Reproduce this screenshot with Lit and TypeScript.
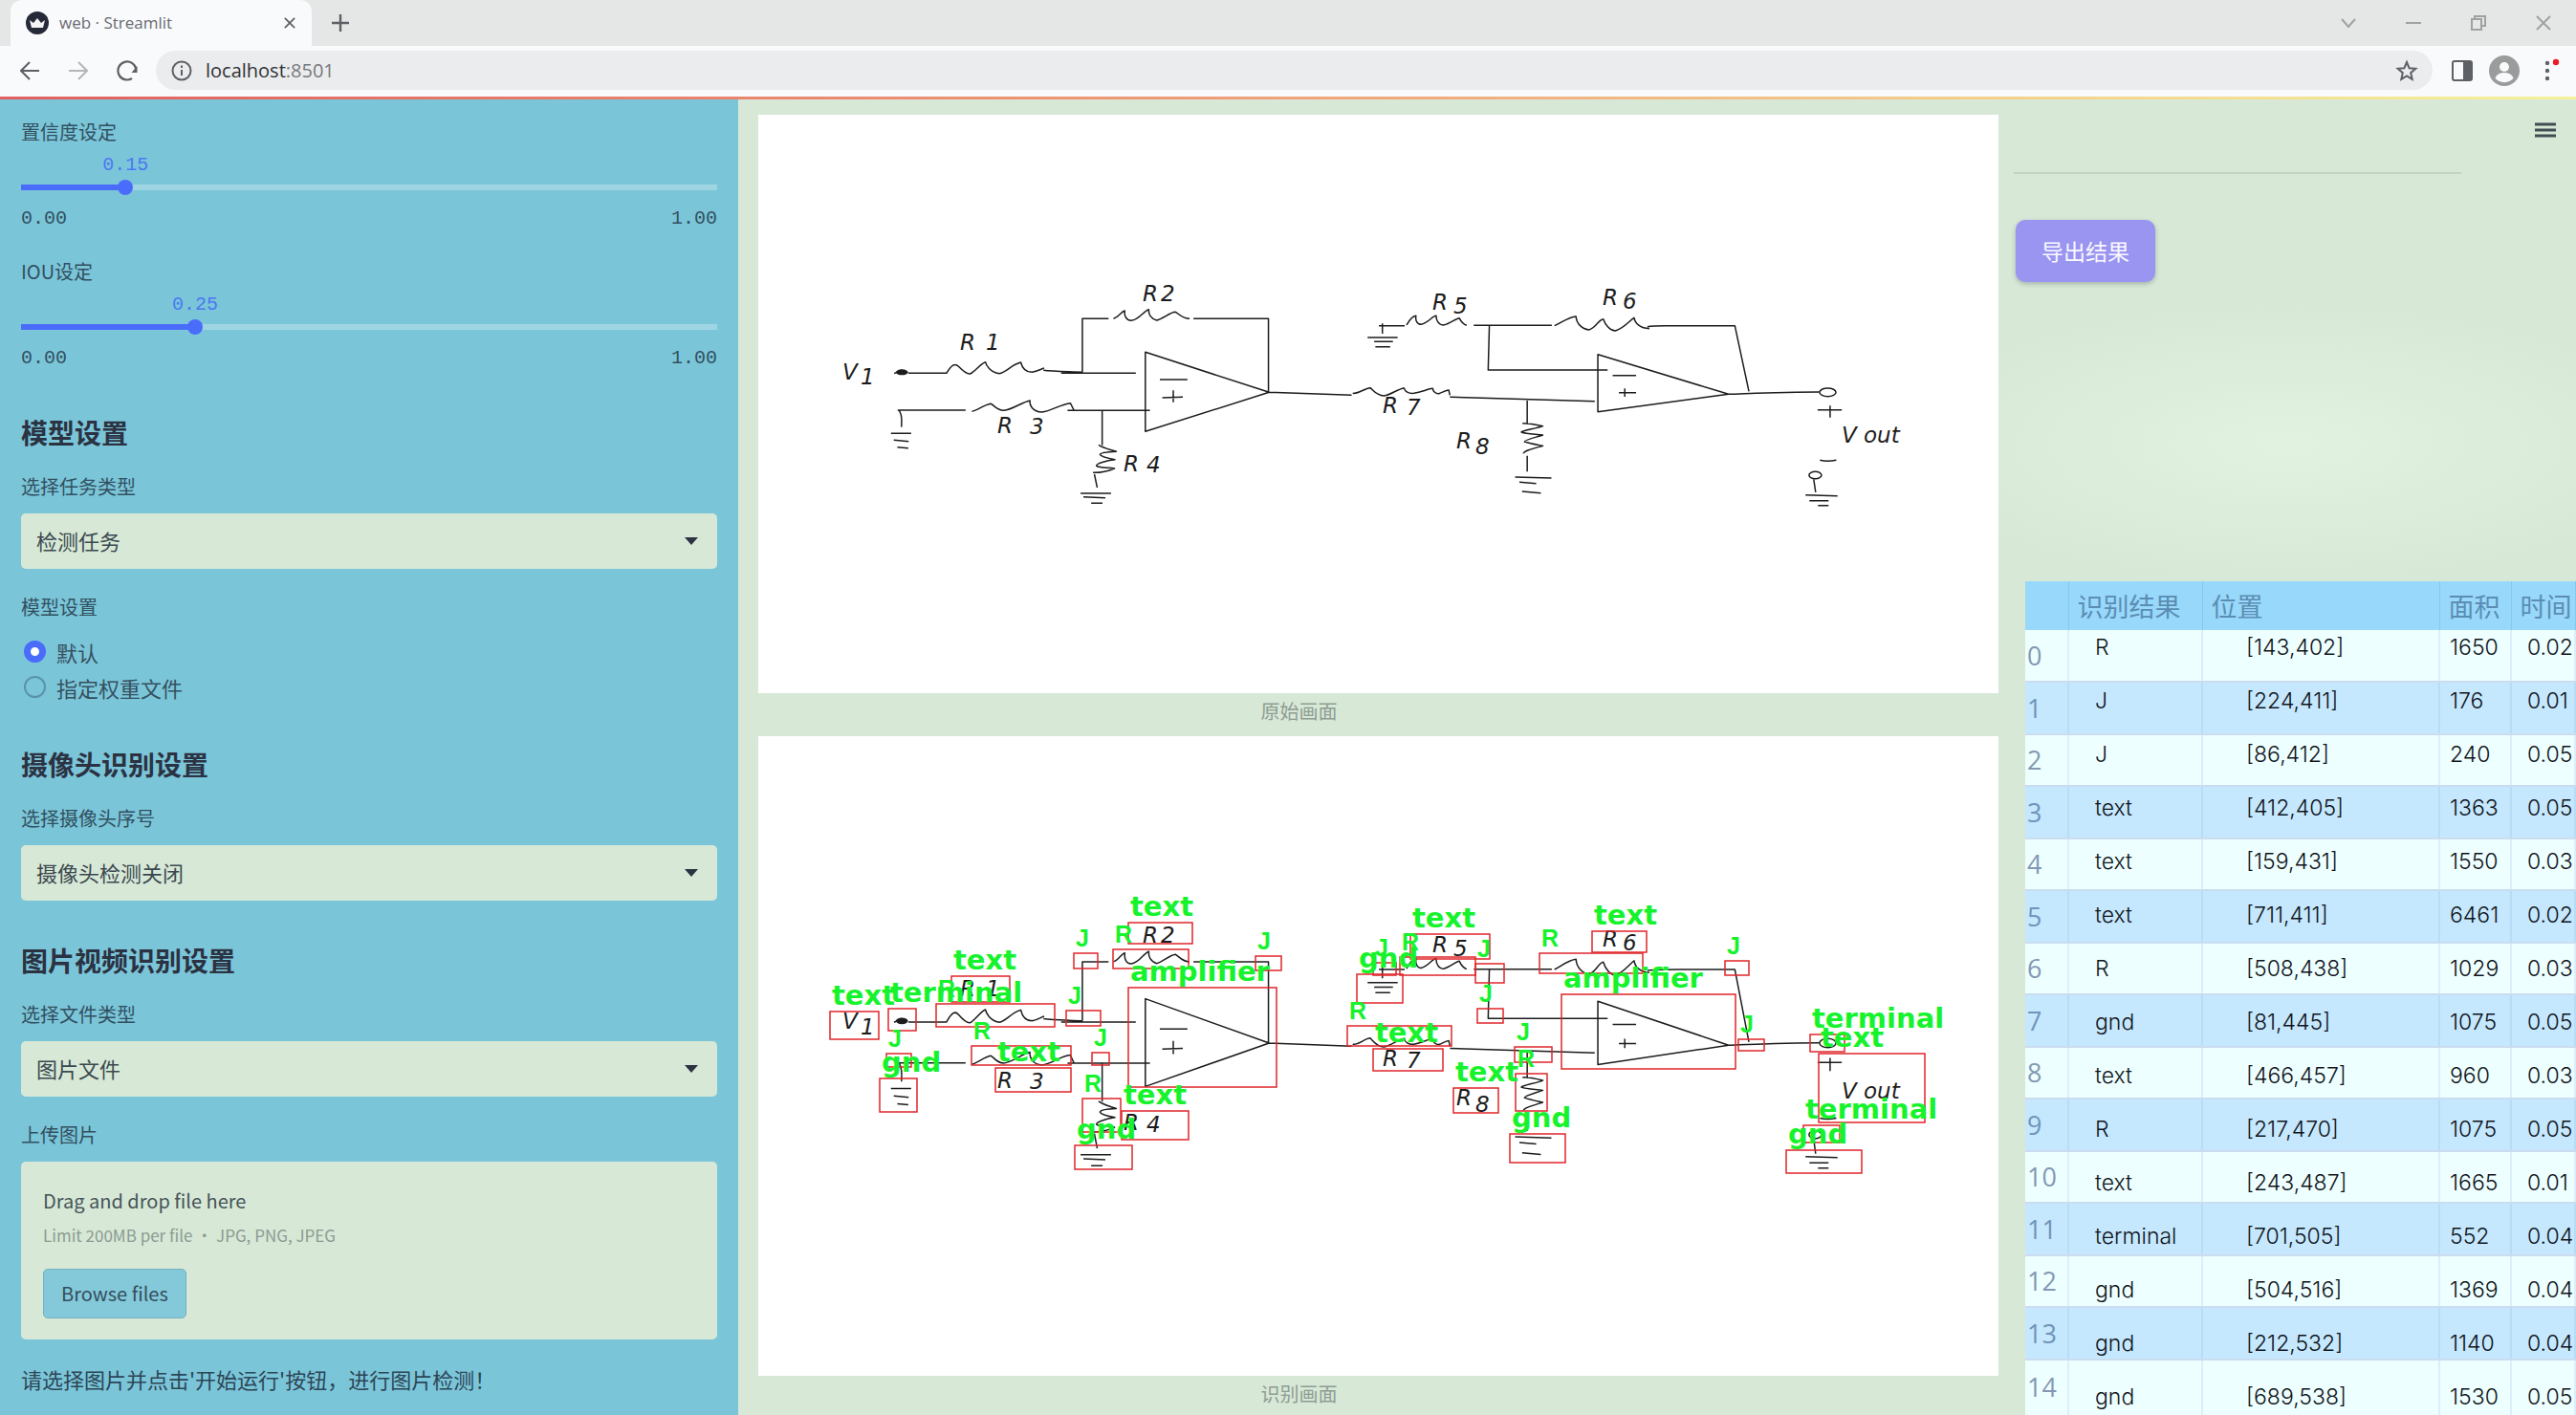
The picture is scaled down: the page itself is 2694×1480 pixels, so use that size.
import { LitElement, html, svg, css } from "lit";
import { customElement, property, state } from "lit/decorators.js";

type Box = [label: string, x: number, y: number, w: number, h: number];
type Mark = [text: string, x: number, y: number];

const BOXES: Box[] = [
  ["text", 387, 195, 67, 22],
  ["R", 371, 223, 79, 20],
  ["J", 330, 227, 25, 16],
  ["J", 520, 230, 27, 15],
  ["text", 202, 251, 61, 27],
  ["text", 75, 288, 51, 29],
  ["terminal", 136, 285, 29, 23],
  ["R", 186, 280, 124, 24],
  ["J", 322, 287, 36, 16],
  ["amplifier", 387, 263, 155, 104],
  ["R", 223, 324, 104, 20],
  ["text", 248, 347, 79, 25],
  ["J", 134, 332, 26, 14],
  ["gnd", 127, 358, 39, 35],
  ["J", 349, 331, 18, 13],
  ["R", 339, 379, 40, 35],
  ["text", 380, 392, 70, 30],
  ["gnd", 331, 428, 60, 25],
  ["text", 682, 207, 83, 26],
  ["R", 671, 231, 79, 19],
  ["J", 643, 237, 24, 13],
  ["gnd", 626, 249, 48, 30],
  ["J", 750, 238, 30, 20],
  ["R", 817, 227, 108, 21],
  ["text", 872, 204, 57, 22],
  ["J", 1011, 235, 25, 15],
  ["J", 752, 285, 27, 15],
  ["amplifier", 840, 270, 182, 78],
  ["R", 616, 303, 109, 21],
  ["text", 643, 327, 73, 23],
  ["J", 791, 325, 39, 16],
  ["R", 792, 353, 33, 39],
  ["text", 727, 368, 47, 26],
  ["gnd", 786, 416, 58, 30],
  ["J", 1025, 317, 27, 12],
  ["terminal", 1100, 312, 36, 18],
  ["text", 1109, 332, 111, 72],
  ["terminal", 1093, 407, 38, 18],
  ["gnd", 1075, 433, 79, 24],
];

const MARKS: Mark[] = [
  ["V", 88, 277], ["1", 107, 282],
  ["R", 211, 246], ["1", 238, 246],
  ["R", 402, 195], ["2", 421, 195],
  ["R", 250, 333], ["3", 284, 334],
  ["R", 382, 373], ["4", 406, 374],
  ["R", 705, 204], ["5", 727, 208],
  ["R", 883, 199], ["6", 904, 203],
  ["R", 653, 312], ["7", 678, 314],
  ["R", 730, 349], ["8", 750, 355],
  ["V", 1133, 343], ["out", 1156, 343],
];

const ROWS: [string, string, string, string][] = [
  ["R", "[143,402]", "1650", "0.02"],
  ["J", "[224,411]", "176", "0.01"],
  ["J", "[86,412]", "240", "0.05"],
  ["text", "[412,405]", "1363", "0.05"],
  ["text", "[159,431]", "1550", "0.03"],
  ["text", "[711,411]", "6461", "0.02"],
  ["R", "[508,438]", "1029", "0.03"],
  ["gnd", "[81,445]", "1075", "0.05"],
  ["text", "[466,457]", "960", "0.03"],
  ["R", "[217,470]", "1075", "0.05"],
  ["text", "[243,487]", "1665", "0.01"],
  ["terminal", "[701,505]", "552", "0.04"],
  ["gnd", "[504,516]", "1369", "0.04"],
  ["gnd", "[212,532]", "1140", "0.04"],
  ["gnd", "[689,538]", "1530", "0.05"],
];

/* First amplifier stage, in its own drawing units. */
const STAGE_ONE = `M230 332L252 321M270 331H378
C392 305 402 298 412 310C425 325 435 335 445 333C460 325 475 300 488 296
C490 305 500 328 527 332C548 328 560 305 588 297C592 315 600 328 620 328C635 325 645 318 654 315
M652 322C680 326 720 326 762 328M702 331H913M762 328V160H836
M850 160C865 155 872 137 882 135C880 150 885 165 900 166C925 162 935 135 950 131
C948 145 955 160 972 165C990 160 1010 140 1025 139C1035 145 1045 160 1065 160
M1076 160H1288V391M940 265V514L1290 391ZM981 351H1059M1019 385V422M988 408L1046 406
M720 448H953M818 448V557
M450 451C465 448 485 430 503 427C512 430 518 447 540 448C565 445 595 420 614 417
C612 430 620 452 648 453C675 450 700 428 728 425C732 432 734 440 738 446
M240 447H432M244 448C255 465 250 480 251 500M221 520H278M229 541L271 545M239 563L270 566
M808 556C820 566 840 570 858 577C835 578 812 580 812 587C815 592 835 598 854 602
C830 605 800 615 802 622C810 628 830 627 853 630C835 638 815 644 792 643M796 648L804 690
M757 708H843M765 719L827 722M787 739H819M1290 391L1523 400`;

/* Second amplifier stage and output terminals. */
const STAGE_TWO = `M152 182H218M161 175V207M123 219H200M140 232H188M143 248H181
M223 180C230 165 238 152 247 151C245 165 250 178 260 178C280 172 288 152 299 151
C298 165 305 180 318 180C335 175 348 160 358 158C362 168 368 178 377 181
M395 181H595M435 181L432 321H738
M602 182C620 172 638 155 657 153C658 175 672 192 690 195C708 190 715 162 727 161
C732 180 745 198 758 198C780 190 795 165 806 157C808 175 822 190 845 191
M840 185C860 182 880 183 918 182M918 182H1064L1100 388
M713 272V452L1048 397ZM1048 397C1080 396 1120 392 1280 390
M751 338H811M782 379V405M767 392H811
M85 394C100 397 115 378 130 377C138 385 145 400 165 402C185 398 200 380 217 378
C218 388 228 396 242 394C262 390 278 380 290 379C290 388 298 396 306 395C315 392 322 385 331 384L334 400
M334 406L705 419M532 413V488
M520 488C535 488 555 492 572 497C555 505 520 510 517 516C530 522 555 522 572 525
C555 532 525 540 525 546C540 552 560 556 572 559C555 565 520 575 523 583
M532 590V640M501 657L594 660M512 673L555 677M519 702L567 707
M1276 446H1338M1308 433V470M1282 604C1295 608 1310 607 1324 604
M1266 664L1271 705M1245 713L1327 716M1255 731H1304M1277 746H1304`;

const TALL = 669 / 605;

@customElement("circuit-view")
export class CircuitView extends LitElement {
  @property({ type: Boolean }) detected = false;

  static styles = css`
    :host { display: block; background: #fff; }
    .canvas { display: block; width: 100%; height: auto; }
    .wire { fill: none; stroke: #1c1c1c; stroke-width: 1.5; stroke-linejoin: round; }
    .dot { fill: #1c1c1c; }
    .mark { font: italic 200 23px "DejaVu Sans", sans-serif; fill: #1c1c1c; }
    .box { fill: none; stroke: #e0262a; stroke-width: 1.5; }
    .tag { font: bold 29px "DejaVu Sans", sans-serif; fill: #16f32c; }
    .tag.class { font: bold 25px "Liberation Sans", sans-serif; }
  `;

  render() {
    const k = this.detected ? TALL : 1;
    return html`
      <svg class="canvas" viewBox="0 0 1297 ${this.detected ? 669 : 605}" role="img"
        aria-label=${this.detected ? "识别画面" : "原始画面"}>
        <g transform="scale(1 ${k})">
          <g transform="translate(57 160) scale(.37 .3333)">
            <path class="wire" vector-effect="non-scaling-stroke" d=${STAGE_ONE} />
            <ellipse class="dot" cx="252" cy="328" rx="17" ry="9" />
          </g>
          <g transform="translate(587 160) scale(.4082 .3333)">
            <path class="wire" vector-effect="non-scaling-stroke" d=${STAGE_TWO} />
            <ellipse class="wire" vector-effect="non-scaling-stroke" cx="1302" cy="391" rx="21" ry="13" />
            <ellipse class="wire" vector-effect="non-scaling-stroke" cx="1270" cy="651" rx="16" ry="11" />
          </g>
        </g>
        ${MARKS.map(([t, x, y]) => svg`<text class="mark" x=${x} y=${Math.round(y * k)}>${t}</text>`)}
        ${this.detected
          ? svg`
            ${BOXES.map(([, x, y, w, h]) => svg`<rect class="box" x=${x} y=${y} width=${w} height=${h} />`)}
            ${BOXES.map(([t, x, y]) => svg`<text class=${t.length === 1 ? "tag class" : "tag"} x=${x + 2} y=${y - 7}>${t}</text>`)}`
          : null}
      </svg>`;
  }
}

@customElement("value-slider")
export class ValueSlider extends LitElement {
  @property() label = "";
  @property({ type: Number }) value = 0;

  static styles = css`
    :host { display: block; color: #31505f; }
    .label { display: block; font-size: 20px; line-height: 30px; }
    .value {
      display: block; width: max-content; margin: 8px 0 2px var(--at);
      transform: translateX(-50%);
      font: 20px/24px "Liberation Mono", monospace; color: #4b79f0;
    }
    .track {
      height: 17px;
      background:
        linear-gradient(#4a6cfb, #4a6cfb) 0 50% / var(--at) 6px no-repeat,
        linear-gradient(#9fd5e3, #9fd5e3) 0 50% / 100% 6px no-repeat;
    }
    .range {
      appearance: none; display: block; width: calc(100% + 16px); height: 17px;
      margin: 0 -8px; background: none;
    }
    .range::-webkit-slider-thumb {
      appearance: none; width: 16px; height: 16px; border-radius: 50%; background: #4a6cfb;
    }
    .ends {
      display: flex; justify-content: space-between; margin-top: 14px;
      font: 20px/22px "Liberation Mono", monospace;
    }
  `;

  render() {
    return html`
      <div style="--at: ${this.value * 100}%">
        <label class="label" for="range">${this.label}</label>
        <output class="value" for="range">${this.value.toFixed(2)}</output>
        <div class="track">
          <input class="range" id="range" type="range" min="0" max="1" step="0.01" .value=${String(this.value)}
            @input=${(e: Event) => (this.value = Number((e.target as HTMLInputElement).value))} />
        </div>
        <div class="ends"><span>0.00</span><span>1.00</span></div>
      </div>`;
  }
}

@customElement("browser-bar")
export class BrowserBar extends LitElement {
  static styles = css`
    :host { display: block; font-family: "Open Sans", "Noto Sans", sans-serif; }
    button {
      display: grid; place-items: center; padding: 0; border: 0; background: none; color: #5d6064;
    }
    svg { display: block; fill: none; stroke: currentColor; stroke-width: 2; }
    .strip { display: flex; height: 48px; padding-left: 11px; background: #e5e7e6; }
    .tab {
      display: flex; align-items: center; gap: 11px; width: 315px; box-sizing: border-box;
      padding: 0 14px 0 16px; border-radius: 12px 12px 0 0; background: #f9fafc;
    }
    .title { flex: 1; font-size: 17px; line-height: 24px; color: #686b70; }
    .close { width: 18px; height: 24px; }
    .add { width: 60px; }
    .window { display: flex; margin-left: auto; }
    .window button { width: 68px; color: #a0a2a2; }
    .bar {
      display: flex; align-items: center; height: 41px; padding: 5px 9px 7px 5px; background: #f9fafc;
    }
    .nav { width: 51px; height: 41px; }
    .forward { color: #b4b6b9; }
    .address {
      flex: 1; display: flex; align-items: center; gap: 14px; height: 41px; margin: 0 9px 0 5px;
      padding: 0 15px 0 16px; border-radius: 21px; background: #ebecee;
    }
    .info { color: #5d6064; }
    .url { flex: 1; font-size: 20px; line-height: 28px; color: #77797d; text-decoration: none; }
    .host { color: #303236; }
    .tool { width: 44px; height: 41px; }
    .load { height: 3px; background: linear-gradient(90deg, #e2605f, #ef9a76 45%, #f4cf8b 77%, #f5f29a); }
  `;

  render() {
    return html`
      <div class="strip">
        <div class="tab">
          <svg width="24" height="24" viewBox="0 0 24 24" stroke="none">
            <circle cx="12" cy="12" r="12" fill="#262a38" stroke="none" />
            <path d="M4 9l4 3 4-5 4 5 4-3-2 8H6z" fill="#f4f4f6" stroke="none" />
          </svg>
          <span class="title">web · Streamlit</span>
          <button class="close" aria-label="关闭标签页">
            <svg width="12" height="12" viewBox="0 0 14 14"><path d="M1 1l12 12M13 1L1 13" /></svg>
          </button>
        </div>
        <button class="add" aria-label="新标签页">
          <svg width="18" height="18" viewBox="0 0 18 18"><path d="M9 0v18M0 9h18" stroke-width="2.4" /></svg>
        </button>
        <div class="window">
          <button aria-label="搜索标签页"><svg width="16" height="16" viewBox="0 0 16 16"><path d="M1 4l7 8 7-8" /></svg></button>
          <button aria-label="最小化"><svg width="16" height="16" viewBox="0 0 16 16"><path d="M0 8h16" /></svg></button>
          <button aria-label="还原"><svg width="16" height="16" viewBox="0 0 16 16"><path d="M1 4h10v11H1zM4 4V1h11v10h-4" /></svg></button>
          <button aria-label="关闭"><svg width="16" height="16" viewBox="0 0 16 16"><path d="M1 1l14 14M15 1L1 15" /></svg></button>
        </div>
      </div>
      <div class="bar">
        <button class="nav" aria-label="后退"><svg width="20" height="20" viewBox="0 0 20 20"><path d="M20 10H2M10 1l-9 9 9 9" /></svg></button>
        <button class="nav forward" aria-label="前进"><svg width="20" height="20" viewBox="0 0 20 20"><path d="M0 10h18M10 1l9 9-9 9" /></svg></button>
        <button class="nav" aria-label="刷新">
          <svg width="22" height="22" viewBox="0 0 22 22"><path d="M16 19A9.500 9.500 0 1 1 20.300 9.500" stroke-width="2.200" /><path d="M21.500 6v7h-6z" fill="currentColor" stroke="none" /></svg>
        </button>
        <div class="address">
          <svg class="info" width="22" height="22" viewBox="0 0 22 22"><circle cx="11" cy="11" r="9.500" /><path d="M11 10v6M11 5.500v2.500" /></svg>
          <a class="url" href="#"><span class="host">localhost</span>:8501</a>
          <button aria-label="收藏">
            <svg width="24" height="24" viewBox="0 0 24 24"><path d="M12 3l2.600 6.200 6.700.6-5.100 4.400 1.500 6.600L12 17.300l-5.700 3.500 1.500-6.600L2.700 9.800l6.700-.6z" /></svg>
          </button>
        </div>
        <button class="tool" aria-label="侧边栏">
          <svg width="22" height="22" viewBox="0 0 22 22"><rect x="1" y="1" width="20" height="20" rx="2" /><path d="M12 1h9v20h-9z" fill="currentColor" stroke="none" /></svg>
        </button>
        <button class="tool" aria-label="用户">
          <svg width="32" height="32" viewBox="0 0 32 32" stroke="none">
            <circle cx="16" cy="16" r="16" fill="#9a9c9b" stroke="none" />
            <circle cx="16" cy="12" r="5" fill="#f9fafc" stroke="none" />
            <path d="M6.500 24c2-8 17-8 19 0a13 13 0 0 1-19 0z" fill="#f9fafc" stroke="none" />
          </svg>
        </button>
        <button class="tool" aria-label="菜单">
          <svg width="28" height="28" viewBox="0 0 28 28" stroke="none">
            <g fill="#5d6064" stroke="none"><circle cx="15" cy="6" r="2.200" /><circle cx="15" cy="14" r="2.200" /><circle cx="15" cy="22" r="2.200" /></g>
            <circle cx="24" cy="5" r="3.200" fill="#ee1c25" stroke="none" />
          </svg>
        </button>
      </div>
      <div class="load"></div>`;
  }
}

@customElement("app-root")
export class AppRoot extends LitElement {
  @state() private weights = "default";

  static styles = css`
    :host {
      display: flex; flex-direction: column; height: 100vh; overflow: hidden;
      font-family: "Noto Sans CJK SC", sans-serif; background: #d7e8d6; color: #31505f;
    }
    .page {
      flex: 1; min-height: 0; display: grid;
      grid-template-columns: minmax(0, 772fr) minmax(0, 1318fr) minmax(0, 604fr);
      grid-template-rows: minmax(0, 1fr);
    }
    .side { padding: 19px 22px 0; background: #7bc5d9; overflow: hidden; }
    .sliders { display: grid; gap: 29px; padding-bottom: 4px; }
    .heading { margin: 42px 0 22px; font-size: 28px; line-height: 40px; font-weight: 700; color: #2b3242; }
    .label { display: block; margin: 0 0 13px; padding: 0; font-size: 20px; line-height: 30px; }
    .field { display: grid; align-items: center; }
    .field > * { grid-area: 1 / 1; }
    .select {
      appearance: none; width: 100%; height: 58px; padding: 0 16px 2px; border: 0; border-radius: 5px;
      background: #d7e8d6; color: #3b4850; font: 22px/34px "Noto Sans CJK SC", sans-serif;
    }
    .arrow { justify-self: end; margin-right: 20px; fill: #2b3242; pointer-events: none; }
    .gap { margin-top: 25px; }
    .group { margin: 25px 0 0; padding: 0; border: 0; }
    .choice { display: flex; align-items: center; gap: 11px; height: 37px; padding-left: 3px; font-size: 22px; color: #35505e; }
    .radio {
      appearance: none; width: 23px; height: 23px; margin: 0; border: 2px solid #5a93a6; border-radius: 50%;
      box-sizing: border-box;
    }
    .radio:checked { border: 7px solid #4a6cfb; background: #fff; }
    .drop {
      display: grid; justify-items: start; height: 186px; box-sizing: border-box;
      padding: 26px 23px 22px; border-radius: 5px; background: #d7e8d6;
      align-content: space-between;
    }
    .hint { font-size: 20px; line-height: 30px; color: #46545a; }
    .limit { margin-top: 8px; font-size: 17px; line-height: 26px; color: #8b9c92; }
    .browse {
      height: 52px; padding: 0 18px; border: 1px solid #74b0c0; border-radius: 5px; background: #84c9da;
      color: #344e5c; font: 20px/30px "Noto Sans CJK SC", sans-serif;
    }
    .note { margin: 25px 0 0; font-size: 22px; line-height: 32px; color: #2c4656; white-space: nowrap; }
    .stage { padding: 16px 0 0 21px; overflow: hidden; }
    .figure { margin: 0 0 7px; }
    .caption { padding-right: 166px; text-align: center; font-size: 20px; line-height: 38px; color: #8e9d93; }
    .panel {
      display: flex; flex-direction: column; padding-top: 16px; overflow: hidden;
      background: radial-gradient(420px 150px at 50% 360px, #e1f3e0, #dff0de 25%, #dbecda 60%, #d7e8d6);
    }
    .menu {
      align-self: flex-end; display: grid; place-items: center; width: 32px; height: 32px;
      margin-right: 16px; padding: 0; border: 0; background: none;
    }
    .rule { width: auto; height: 2px; margin: 28px 120px 48px 16px; border: 0; background: #c3d3c3; }
    .export {
      align-self: flex-start; height: 65px; margin-left: 18px; padding: 0 27px 2px; border: 0; border-radius: 10px;
      background: #9995f1; color: #fbf9ff; font: 23px/34px "Noto Sans CJK SC", sans-serif;
      box-shadow: 0 2px 5px #a5b3ac;
    }
    .results {
      flex: 1; min-height: 0; display: grid; align-items: start; grid-template-columns: minmax(0, 1fr);
      margin: 313px 0 0 28px; overflow: hidden; background: #eeffff;
    }
    .results > * { grid-area: 1 / 1; }
    .table { width: 100%; border-collapse: collapse; table-layout: fixed; }
    .table th, .table td { padding: 0; text-align: left; font-weight: 400; white-space: nowrap; }
    .c-index { width: 45px; }
    .c-name { width: 140px; }
    .c-place { width: 248px; }
    .c-area { width: 75px; }
    .frame .head th {
      height: 51px; padding-left: 9px; font-size: 27px; line-height: 38px; color: #5b8db3; background: #98d8fa;
      border-right: 1px solid #84c8ec; box-sizing: border-box;
    }
    .frame tbody td, .frame tbody th {
      height: 54px; box-sizing: border-box; border-right: 2px solid #dbeefb; border-bottom: 2px solid #cbdcf1;
    }
    .frame tbody th { padding-left: 2px; font: 27px/36px "Open Sans", "Noto Sans", sans-serif; color: #8498b3; }
    .frame tbody tr:nth-child(even) > * { height: 55px; background: #c5e8ff; border-right-color: #b7dcf5; }
    .frame tbody tr:nth-child(even) th { color: #7095b8; }
    .frame tbody tr:last-child > * { height: 64px; padding-bottom: 6px; }
    .values { width: auto; margin: 41px 0 0 45px; }
    .values td { height: 56px; font: 300 23px/28px Inter, sans-serif; color: #10141a; }
    .values td:nth-child(1) { padding-left: 28px; }
    .values td:nth-child(2) { padding-left: 46px; }
    .values td:nth-child(3) { padding-left: 11px; }
    .values td:nth-child(4) { padding-left: 17px; }
  `;

  private picker(id: string, label: string, option: string) {
    return html`
      <label class="label" for=${id}>${label}</label>
      <div class="field">
        <select class="select" id=${id}><option>${option}</option></select>
        <svg class="arrow" width="14" height="8" viewBox="0 0 14 8"><path d="M0 0h14L7 8z" /></svg>
      </div>`;
  }

  private choice(value: string, text: string) {
    return html`
      <label class="choice">
        <input class="radio" type="radio" name="weights" .checked=${this.weights === value}
          @change=${() => (this.weights = value)} />${text}
      </label>`;
  }

  private browse() {
    this.renderRoot.querySelector<HTMLInputElement>("#upload")?.click();
  }

  render() {
    return html`
      <browser-bar></browser-bar>
      <div class="page">
        <aside class="side">
          <div class="sliders">
            <value-slider label="置信度设定" .value=${0.15}></value-slider>
            <value-slider label="IOU设定" .value=${0.25}></value-slider>
          </div>
          <h2 class="heading">模型设置</h2>
          ${this.picker("task", "选择任务类型", "检测任务")}
          <fieldset class="group">
            <legend class="label">模型设置</legend>
            ${this.choice("default", "默认")} ${this.choice("custom", "指定权重文件")}
          </fieldset>
          <h2 class="heading">摄像头识别设置</h2>
          ${this.picker("camera", "选择摄像头序号", "摄像头检测关闭")}
          <h2 class="heading">图片视频识别设置</h2>
          ${this.picker("kind", "选择文件类型", "图片文件")}
          <label class="label gap" for="upload">上传图片</label>
          <div class="drop">
            <div>
              <div class="hint">Drag and drop file here</div>
              <div class="limit">Limit 200MB per file • JPG, PNG, JPEG</div>
            </div>
            <input id="upload" type="file" accept=".jpg,.jpeg,.png" hidden />
            <button class="browse" @click=${this.browse}>Browse files</button>
          </div>
          <p class="note">请选择图片并点击'开始运行'按钮，进行图片检测！</p>
        </aside>
        <main class="stage">
          <figure class="figure">
            <circuit-view></circuit-view>
            <figcaption class="caption">原始画面</figcaption>
          </figure>
          <figure class="figure">
            <circuit-view detected></circuit-view>
            <figcaption class="caption">识别画面</figcaption>
          </figure>
        </main>
        <section class="panel">
          <button class="menu" aria-label="菜单">
            <svg width="22" height="16" viewBox="0 0 22 16"><path d="M0 2h22M0 8h22M0 14h22" stroke="#414d52" stroke-width="3" /></svg>
          </button>
          <hr class="rule" />
          <button class="export">导出结果</button>
          <div class="results">
            <table class="table frame">
              <colgroup><col class="c-index" /><col class="c-name" /><col class="c-place" /><col class="c-area" /><col /></colgroup>
              <thead><tr class="head"><th></th><th>识别结果</th><th>位置</th><th>面积</th><th>时间</th></tr></thead>
              <tbody>${ROWS.map((_, i) => html`<tr><th scope="row">${i}</th><td></td><td></td><td></td><td></td></tr>`)}</tbody>
            </table>
            <table class="table values">
              <colgroup><col class="c-name" /><col class="c-place" /><col class="c-area" /><col /></colgroup>
              <tbody>${ROWS.map((r) => html`<tr>${r.map((c) => html`<td>${c}</td>`)}</tr>`)}</tbody>
            </table>
          </div>
        </section>
      </div>`;
  }
}
